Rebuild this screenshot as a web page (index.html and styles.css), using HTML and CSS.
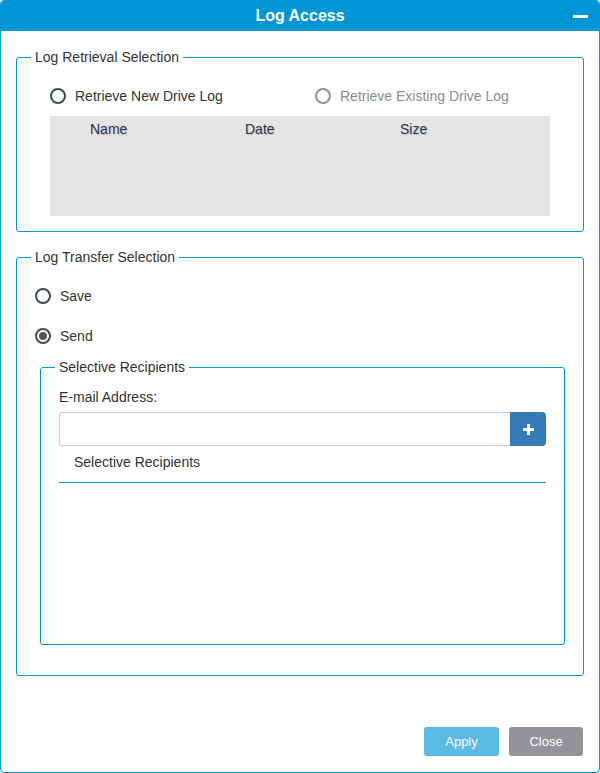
FILE: index.html
```html
<!DOCTYPE html>
<html>
<head>
<meta charset="utf-8">
<link rel="stylesheet" href="styles.css">
</head>
<body>
<div class="dialog">
  <div class="titlebar">
    <span></span>
    <span class="title">Log Access</span>
    <span class="minimize"></span>
  </div>
  <div class="content">
    <fieldset class="group">
      <legend>Log Retrieval Selection</legend>
      <div class="retrieve-row">
        <label class="option first"><span class="radio"></span><span>Retrieve New Drive Log</span></label>
        <label class="option disabled"><span class="radio"></span><span>Retrieve Existing Drive Log</span></label>
      </div>
      <div class="log-table">
        <div class="log-head">
          <span>Name</span><span>Date</span><span>Size</span>
        </div>
      </div>
    </fieldset>

    <fieldset class="group transfer">
      <legend>Log Transfer Selection</legend>
      <label class="option stacked"><span class="radio"></span><span>Save</span></label>
      <label class="option stacked"><span class="radio checked"></span><span>Send</span></label>
      <fieldset class="group recipients">
        <legend>Selective Recipients</legend>
        <div class="recipients-body">
          <div class="field-label">E-mail Address:</div>
          <div class="input-group">
            <input class="email" type="text">
            <button class="add-btn" type="button">
              <svg width="11" height="11" viewBox="0 0 11 11"><rect x="4" y="0" width="3" height="11" fill="#fff"/><rect x="0" y="4" width="11" height="3" fill="#fff"/></svg>
            </button>
          </div>
          <div class="list-head">Selective Recipients</div>
          <div class="list-body"></div>
        </div>
      </fieldset>
    </fieldset>
  </div>
  <div class="footer">
    <button class="btn apply" type="button">Apply</button>
    <button class="btn close" type="button">Close</button>
  </div>
</div>
</body>
</html>
```
FILE: styles.css
```css
html, body {
  margin: 0;
  padding: 0;
  background: #fff;
}
body {
  font-family: "Liberation Sans", Arial, sans-serif;
  font-size: 14px;
  color: #333;
}
.dialog {
  width: 600px;
  height: 773px;
  box-sizing: border-box;
  border: 1px solid #0096d6;
  border-radius: 4px;
  display: flex;
  flex-direction: column;
  overflow: hidden;
}
.titlebar {
  height: 30px;
  background: #0096d6;
  display: grid;
  grid-template-columns: 1fr auto 1fr;
  align-items: center;
  color: #fff;
}
.title {
  font-weight: bold;
  font-size: 16px;
  line-height: 30px;
}
.minimize {
  justify-self: end;
  width: 15px;
  height: 3px;
  background: #fff;
  margin-right: 11px;
  margin-top: 1px;
}
.content {
  padding: 0 15px;
}
.group {
  margin: 18px 0 0;
  padding: 0;
  border: 1px solid #0096d6;
  border-radius: 3px;
  min-width: 0;
}
.group legend {
  margin-left: 14px;
  padding: 0 4px;
  line-height: 16px;
  font-size: 14px;
  color: #333;
}
.retrieve-row {
  display: flex;
  margin: 21px 0 0 33px;
  height: 20px;
  align-items: center;
}
.option {
  display: flex;
  align-items: center;
  height: 20px;
  line-height: 20px;
}
.option.first {
  width: 265px;
}
.radio {
  width: 16px;
  height: 16px;
  box-sizing: border-box;
  border: 2px solid #3f4a55;
  border-radius: 50%;
  margin-right: 9px;
  position: relative;
}
.radio.checked {
  background: #fff;
}
.radio.checked::after {
  content: "";
  position: absolute;
  left: 2px;
  top: 2px;
  width: 8px;
  height: 8px;
  border-radius: 50%;
  background: #555;
}
.option.disabled {
  color: #8c8c8c;
}
.option.disabled .radio {
  border-color: #8a939b;
}
.log-table {
  margin: 10px 33px 15px;
  height: 100px;
  background: #e5e5e5;
}
.log-head {
  display: grid;
  grid-template-columns: 155px 155px 155px;
  padding: 5px 0 0 40px;
  line-height: 16px;
  text-shadow: 1px 1px 1px rgba(90, 110, 220, 0.3);
}
.group.transfer {
  margin-top: 17px;
  padding-bottom: 30px;
}
.option.stacked {
  margin: 20px 0 0 18px;
}
.option.stacked:first-of-type {
  margin-top: 21px;
}
.group.recipients {
  margin: 13px 18px 0 23px;
  padding: 0;
}
.recipients-body {
  padding: 0 18px 0 18px;
}
.field-label {
  margin-top: 14px;
  line-height: 16px;
}
.input-group {
  display: flex;
  margin-top: 7px;
  height: 34px;
}
.email {
  flex: 1;
  min-width: 0;
  margin: 0;
  box-sizing: border-box;
  height: 34px;
  border: 1px solid #ccc;
  border-right: none;
  border-radius: 3px 0 0 3px;
  padding: 6px 12px;
  font-family: inherit;
  font-size: 14px;
  outline: none;
}
.add-btn {
  width: 36px;
  height: 34px;
  margin: 0;
  padding: 0;
  border: none;
  border-radius: 0 4px 4px 0;
  background: #337ab7;
  display: flex;
  align-items: center;
  justify-content: center;
}
.list-head {
  margin-top: 8px;
  padding: 0 0 12px 15px;
  line-height: 16px;
  border-bottom: 1px solid #0096d6;
}
.list-body {
  height: 161px;
}
.footer {
  margin-top: auto;
  display: flex;
  justify-content: flex-end;
  gap: 10px;
  padding: 0 16px 16px 0;
}
.btn {
  height: 29px;
  margin: 0;
  border: none;
  border-radius: 3px;
  color: #fff;
  font-family: "Liberation Sans", Arial, sans-serif;
  font-size: 13px;
  padding: 0;
}
.apply {
  width: 75px;
  background: #5bbae6;
}
.close {
  width: 74px;
  background: #939598;
}
```
